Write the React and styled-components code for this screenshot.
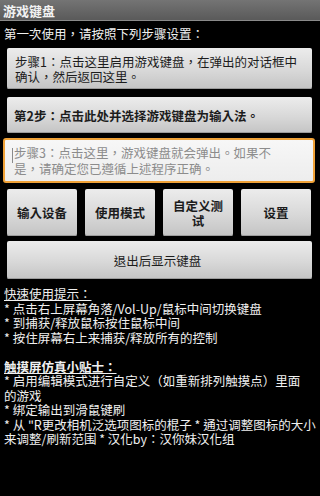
import React from 'react';
import styled, { createGlobalStyle } from 'styled-components';

const GlobalStyle = createGlobalStyle`
    html, body {
        margin: 0;
        padding: 0;
        background: #000000;
    }
    body {
        font-family: 'Noto Sans CJK TC', 'Noto Sans CJK SC', 'DejaVu Sans', sans-serif;
    }
`;

const Screen = styled.div`
    width: 320px;
    height: 496px;
    background: #000000;
    display: flex;
    flex-direction: column;
    overflow: hidden;
`;

const TitleBar = styled.div`
    height: 20px;
    display: flex;
    align-items: center;
    padding-left: 3px;
    background: linear-gradient(#747474, #5a5a5a);
    border-bottom: 1px solid #8a8a8a;
    color: #f2f2f2;
    font-size: 13px;
    font-weight: bold;
`;

const Intro = styled.div`
    margin: 5px 0 0 4px;
    line-height: 15px;
    font-size: 12.5px;
    color: #f0f0f0;
`;

const GrayButton = styled.div`
    box-sizing: border-box;
    height: ${(p) => p.h}px;
    margin: ${(p) => p.top}px 8px 0 7px;
    padding: 0 4px 0 ${(p) => p.left || 0}px;
    display: flex;
    align-items: center;
    justify-content: ${(p) => (p.center ? 'center' : 'flex-start')};
    background: linear-gradient(#ececec, #d8d8d8 55%, #c4c4c4);
    border-radius: 2px;
    box-shadow: inset 0 -1px 0 #9c9c9c;
    color: #1c1c1c;
    font-size: 12.5px;
    line-height: 15px;
    white-space: nowrap;
    font-weight: ${(p) => (p.bold ? 'bold' : 'normal')};
`;

const EditBox = styled.div`
    box-sizing: border-box;
    position: relative;
    height: 45px;
    margin: 5px 5px 0 3px;
    padding: 0 4px 0 9px;
    display: flex;
    align-items: center;
    background: linear-gradient(#f7f7f7, #ededed);
    border: 2px solid #f0a238;
    border-radius: 3px;
    color: #8c8c8c;
    font-size: 12.5px;
    line-height: 16px;
    white-space: nowrap;
`;

const Cursor = styled.span`
    position: absolute;
    left: 7px;
    top: 8px;
    width: 1px;
    height: 15px;
    background: #8a8a8a;
`;

const ButtonRow = styled.div`
    display: grid;
    grid-template-columns: repeat(4, 70px);
    gap: 8px;
    margin: 6px 0 0 7px;
`;

const SmallButton = styled.div`
    box-sizing: border-box;
    height: 47px;
    padding: 0 8px;
    display: flex;
    align-items: center;
    justify-content: center;
    text-align: center;
    background: linear-gradient(#ececec, #d8d8d8 55%, #c4c4c4);
    border-radius: 2px;
    box-shadow: inset 0 -1px 0 #9c9c9c;
    color: #1c1c1c;
    font-size: 12.5px;
    line-height: 15px;
    font-weight: bold;
`;

const Tips = styled.div`
    margin: 8px 4px 0 4px;
    color: #f0f0f0;
    font-size: 12.5px;
    line-height: 14.5px;
`;

const Heading = styled.div`
    text-decoration: underline;
    font-weight: ${(p) => (p.bold ? 'bold' : 'normal')};
`;

const Line = styled.div`
    min-height: 14.5px;
    white-space: nowrap;
`;

const quickTips = [
    '* 点击右上屏幕角落/Vol-Up/鼠标中间切换键盘',
    '* 到捕获/释放鼠标按住鼠标中间',
    '* 按住屏幕右上来捕获/释放所有的控制',
];

const touchTips = [
    '* 启用编辑模式进行自定义（如重新排列触摸点）里面',
    '的游戏',
    '* 绑定输出到滑鼠键刷',
    '* 从 "R更改相机泛选项图标的棍子 * 通过调整图标的大小',
    '来调整/刷新范围 * 汉化by：汉你妹汉化组',
];

const rowButtons = ['输入设备', '使用模式', '自定义测试', '设置'];

export default function App() {
    return (
        <Screen>
            <GlobalStyle />
            <TitleBar>游戏键盘</TitleBar>
            <Intro>第一次使用，请按照下列步骤设置：</Intro>
            <GrayButton h={41} top={7} left={8}>
                <div>
                    步骤1：点击这里启用游戏键盘，在弹出的对话框中
                    <br />
                    确认，然后返回这里。
                </div>
            </GrayButton>
            <GrayButton h={36} top={8} left={7} bold>
                第2步：点击此处并选择游戏键盘为输入法。
            </GrayButton>
            <EditBox>
                <Cursor />
                <div>
                    步骤3：点击这里，游戏键盘就会弹出。如果不
                    <br />
                    是，请确定您已遵循上述程序正确。
                </div>
            </EditBox>
            <ButtonRow>
                {rowButtons.map((label) => (
                    <SmallButton key={label}>{label}</SmallButton>
                ))}
            </ButtonRow>
            <GrayButton h={38} top={5} center>
                退出后显示键盘
            </GrayButton>
            <Tips>
                <Heading>快速使用提示：</Heading>
                {quickTips.map((t) => (
                    <Line key={t}>{t}</Line>
                ))}
                <Line />
                <Heading bold>触摸屏仿真小贴士：</Heading>
                {touchTips.map((t) => (
                    <Line key={t}>{t}</Line>
                ))}
            </Tips>
        </Screen>
    );
}
